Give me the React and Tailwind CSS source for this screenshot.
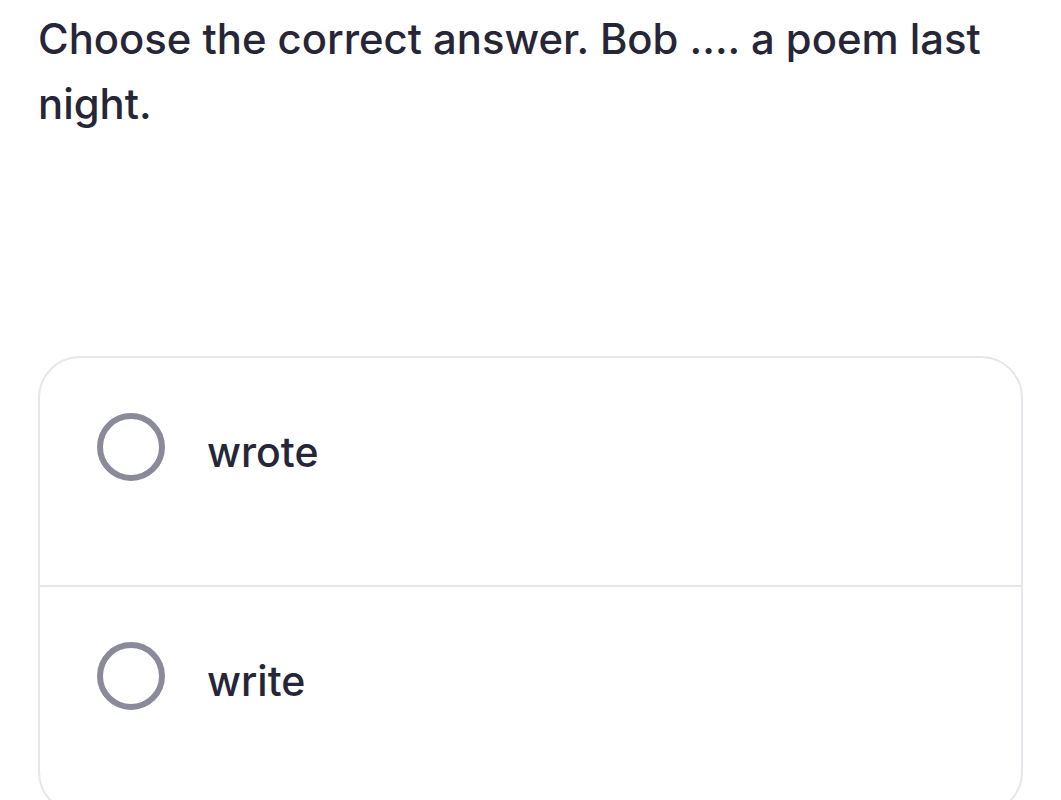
export default function App() {
  const options = ["wrote", "write"];
  return (
    <div className="w-[1061px] h-[800px] overflow-hidden bg-white" style={{ fontFamily: "Inter, 'Noto Sans', sans-serif" }}>
      <div className="pl-[38px] pr-[40px] pt-[7px]">
        <h1 className="text-[41.8px] leading-[65px] font-medium text-[#262637]">
          Choose the correct answer. Bob .... a poem last night.
        </h1>
      </div>
      <div className="mt-[219px] ml-[38px] w-[985px] rounded-[42px] border-2 border-[#e6e6ec] overflow-hidden">
        {options.map((o, i) => (
          <div
            key={o}
            className={`flex items-start gap-[42px] pl-[57px] pt-[55px] h-[227px] ${i > 0 ? "border-t-2 border-[#e6e6ec]" : ""}`}
          >
            <div className="w-[68px] h-[68px] rounded-full border-[6px] border-[#8a8a9a] shrink-0" />
            <span className="mt-[5px] text-[41px] leading-[68px] font-medium text-[#262637]">{o}</span>
          </div>
        ))}
      </div>
    </div>
  );
}
